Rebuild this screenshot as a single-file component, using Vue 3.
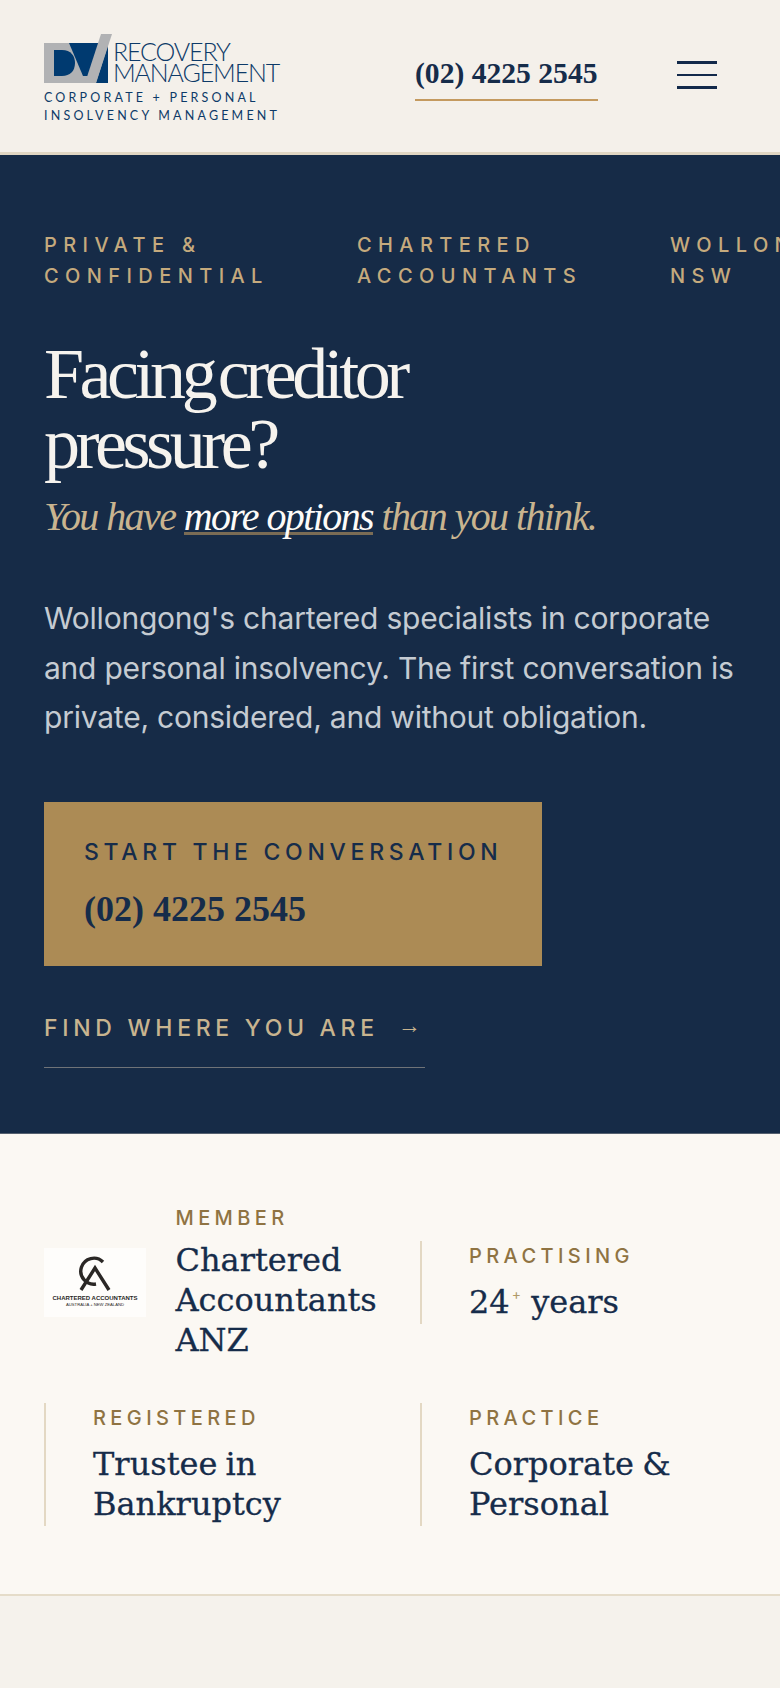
<template>
  <div class="page">
    <header class="top">
      <div class="brand">
        <div class="brand-row">
          <svg class="mark" width="68" height="50" viewBox="44 33 68 50">
            <rect x="44" y="42" width="64" height="40" fill="#b1b2b4" />
            <path d="M54 49 H62 C71 49 75 55 75 62 C75 70 70 75 62 75 H54 Z" fill="#003a70" />
            <path d="M69 42 H104 L88 75 H83 Z" fill="#003a70" />
            <path d="M108 44 V82 H96 Z" fill="#003a70" />
            <path d="M101 33 H112 L96 82 H85 Z" fill="#b1b2b4" />
          </svg>
          <div class="brand-name">
            <span>RECOVERY</span>
            <span>MANAGEMENT</span>
          </div>
        </div>
        <div class="brand-sub">CORPORATE + PERSONAL</div>
        <div class="brand-sub">INSOLVENCY MANAGEMENT</div>
      </div>
      <a class="top-phone">(02) 4225 2545</a>
      <button class="burger" aria-label="Menu">
        <span></span>
        <span class="thin"></span>
        <span></span>
      </button>
    </header>

    <section class="hero">
      <div class="tags">
        <div v-for="tag in tags" :key="tag" class="tag">{{ tag }}</div>
      </div>
      <h1>Facing creditor<br />pressure?</h1>
      <p class="lead">You have <em>more options</em> than you think.</p>
      <p class="intro">
        Wollongong's chartered specialists in corporate and personal insolvency. The first conversation is
        private, considered, and without obligation.
      </p>
      <a class="cta">
        <span class="cta-label">START THE CONVERSATION</span>
        <span class="cta-phone">(02) 4225 2545</span>
      </a>
      <a class="find">FIND WHERE YOU ARE <span class="arrow">→</span></a>
    </section>

    <section class="trust">
      <div class="member">
        <div class="ca-logo">
          <svg width="102" height="45" viewBox="0 0 102 45" fill="none" stroke="#2a2725" stroke-width="3.4">
            <path d="M59 14 A13 13 0 1 0 52 36" />
            <path d="M37 42 L51 20 L65 42" />
          </svg>
          <div class="ca-name">CHARTERED ACCOUNTANTS</div>
          <div class="ca-sub">AUSTRALIA + NEW ZEALAND</div>
        </div>
        <div>
          <div class="label">MEMBER</div>
          <div class="value first">Chartered Accountants ANZ</div>
        </div>
      </div>
      <div class="ruled">
        <div class="label">PRACTISING</div>
        <div class="value">24<sup>+</sup> years</div>
      </div>
      <div class="ruled">
        <div class="label">REGISTERED</div>
        <div class="value">Trustee in<br />Bankruptcy</div>
      </div>
      <div class="ruled">
        <div class="label">PRACTICE</div>
        <div class="value">Corporate &amp;<br />Personal</div>
      </div>
    </section>

    <div class="rest"></div>
  </div>
</template>

<script setup>
const tags = ['PRIVATE & CONFIDENTIAL', 'CHARTERED ACCOUNTANTS', 'WOLLONGONG NSW']
</script>

<style>
html,
body {
  margin: 0;
  background: #f5f2ec;
}
</style>

<style scoped>
.page {
  width: 780px;
  height: 1688px;
  overflow: hidden;
  display: flex;
  flex-direction: column;
  font-family: Inter, 'Liberation Sans', sans-serif;
  background: #f5f2ec;
}

.top {
  height: 152px;
  flex: none;
  background: #f4f0ea;
  border-bottom: 3px solid #e0d6c3;
  display: flex;
  align-items: center;
  padding: 0 63px 0 44px;
}

.brand {
  width: 236px;
  color: #0d3a68;
  margin-top: 6px;
}

.brand-row {
  display: flex;
  align-items: flex-end;
  gap: 1px;
  margin-bottom: 5px;
}

.mark {
  display: block;
  flex: none;
}

.brand-name {
  font-family: Lato, 'Liberation Sans', sans-serif;
  font-weight: 300;
  font-size: 25px;
  line-height: 21px;
  letter-spacing: -0.045em;
  display: flex;
  flex-direction: column;
  white-space: nowrap;
  margin-bottom: 1px;
}

.brand-sub {
  font-family: Lato, 'Liberation Sans', sans-serif;
  font-size: 12.5px;
  line-height: 18px;
  letter-spacing: 0.255em;
  white-space: nowrap;
}

.top-phone {
  margin-left: 135px;
  width: 183px;
  font-family: 'Liberation Serif', serif;
  font-weight: 700;
  font-size: 29.6px;
  line-height: 36px;
  color: #162c4a;
  padding-bottom: 8px;
  border-bottom: 2px solid #c49a5f;
  margin-top: 4px;
  white-space: nowrap;
}

.burger {
  margin-left: auto;
  width: 40px;
  height: 28px;
  padding: 0;
  border: 0;
  background: none;
  display: flex;
  flex-direction: column;
  justify-content: space-between;
  margin-top: -3px;
}

.burger span {
  display: block;
  height: 3px;
  background: #12294a;
}

.burger span.thin {
  height: 2px;
}

.hero {
  flex: none;
  background: #162b47;
  padding: 75px 0 65px 44px;
  overflow: hidden;
  border-bottom: 1px solid #55606f;
}

.tags {
  display: flex;
  width: 1000px;
}

.tag {
  width: 235px;
  margin-right: 78px;
  flex: none;
  font-size: 20px;
  line-height: 31px;
  font-weight: 500;
  letter-spacing: 0.32em;
  color: #c5aa7d;
}

h1 {
  margin: 47px 0 0;
  font-family: 'Liberation Serif', serif;
  font-weight: 400;
  font-size: 72px;
  line-height: 70px;
  letter-spacing: -0.062em;
  word-spacing: -9px;
  color: #f6f3ee;
}

.lead {
  margin: 13px 0 0;
  font-family: 'Liberation Serif', serif;
  font-style: italic;
  font-size: 40px;
  line-height: 50px;
  letter-spacing: -0.04em;
  color: #c9b48f;
  white-space: nowrap;
}

.lead em {
  color: #fdfbf8;
  border-bottom: 3px solid #7a6c55;
  line-height: 30px;
  display: inline-block;
}

.intro {
  margin: 52px 0 0;
  width: 700px;
  font-size: 30px;
  font-weight: 400;
  line-height: 49.5px;
  letter-spacing: -0.0075em;
  color: #c5cbd2;
}

.cta {
  margin-top: 59px;
  width: 498px;
  height: 164px;
  box-sizing: border-box;
  padding: 34px 0 0 40px;
  display: flex;
  flex-direction: column;
  background: #ac8b55;
  color: #162c4a;
}

.cta-label {
  font-size: 23px;
  line-height: 32px;
  font-weight: 500;
  letter-spacing: 0.205em;
  white-space: nowrap;
}

.cta-phone {
  margin-top: 21px;
  font-family: 'Liberation Serif', serif;
  font-weight: 700;
  font-size: 36px;
  line-height: 40px;
}

.find {
  margin-top: 46px;
  width: 381px;
  height: 55px;
  display: block;
  font-size: 23px;
  line-height: 32px;
  font-weight: 500;
  letter-spacing: 0.205em;
  color: #c8b48f;
  border-bottom: 1px solid #6f7378;
  white-space: nowrap;
}

.arrow {
  font-family: 'Liberation Sans', sans-serif;
  margin-left: 8px;
  letter-spacing: 0;
  position: relative;
  top: -3px;
}

.trust {
  flex: none;
  background: #fbf8f3;
  border-bottom: 2px solid #e5dcc9;
  padding: 71px 44px 68px;
  display: grid;
  grid-template-columns: 376px 1fr;
  row-gap: 43px;
  align-items: center;
}

.member {
  display: flex;
  align-items: center;
  gap: 29.5px;
}

.ruled {
  border-left: 2px solid #e3d8c3;
  padding: 2px 0 2px 47px;
}

.label {
  font-size: 20px;
  line-height: 26px;
  font-weight: 500;
  letter-spacing: 0.22em;
  color: #8f7342;
}

.value {
  margin-top: 13px;
  font-family: 'DejaVu Serif', serif;
  font-size: 32px;
  line-height: 40px;
  word-spacing: -2px;
  -webkit-text-stroke: 0.3px #162c4a;
  color: #162c4a;
}

.value.first {
  margin-top: 9px;
}

.value sup {
  font-family: Inter, sans-serif;
  font-size: 14px;
  color: #b09968;
  -webkit-text-stroke: 0;
  line-height: 0;
  vertical-align: 14px;
  margin: 0 2px 0 2px;
}

.ca-logo {
  width: 102px;
  height: 69px;
  flex: none;
  background: #fefdfb;
  display: flex;
  flex-direction: column;
  align-items: center;
  color: #2a2725;
  font-family: 'Liberation Sans', sans-serif;
  white-space: nowrap;
}

.ca-logo svg {
  display: block;
  flex: none;
}

.ca-name {
  font-size: 6px;
  line-height: 7px;
  font-weight: 700;
  margin-top: 2px;
}

.ca-sub {
  font-size: 4.2px;
  line-height: 6px;
}

.rest {
  flex: 1;
  background: #f5f2ec;
}
</style>
